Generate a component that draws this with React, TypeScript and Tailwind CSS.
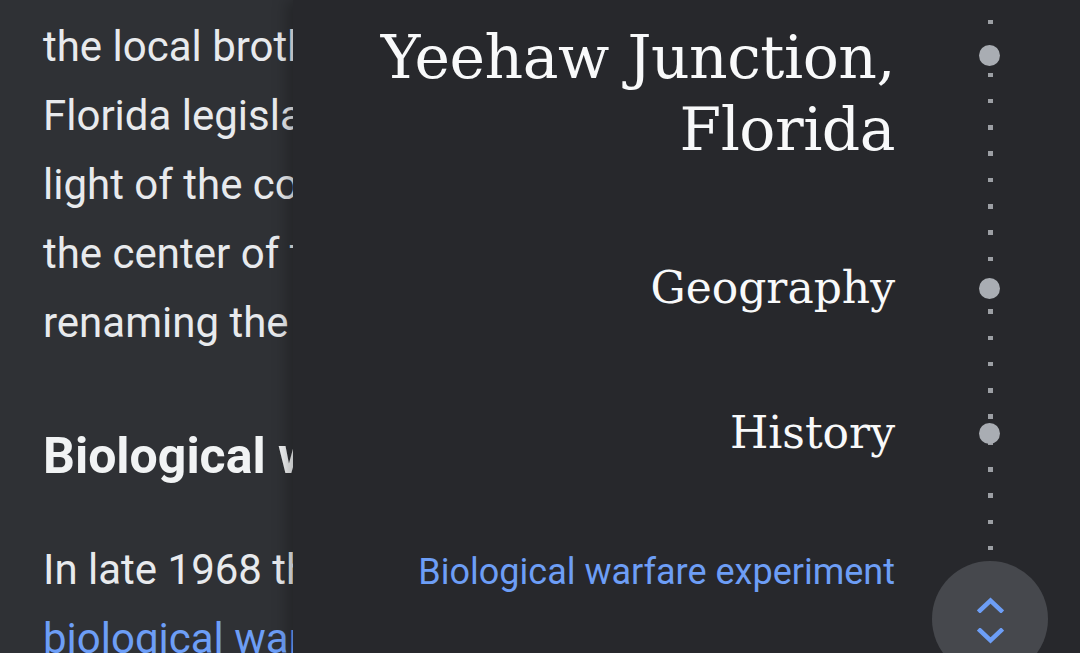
import React from "react";

const BODY_TOP = ["the local brothel", "Florida legislature", "light of the controversy", "the center of the", "renaming the"];

const SECTIONS = [
  { name: "Geography", top: "mt-[93px]" },
  { name: "History", top: "mt-[85px]" },
];

function Dot() {
  return <div className="w-[21px] h-[21px] rounded-full bg-[#a9adb3]" />;
}

export default function App() {
  return (
    <div className="flex w-[1080px] h-[653px] overflow-hidden bg-[#2f3135] font-['Roboto',sans-serif]">
      {/* article behind the drawer */}
      <div className="w-[293px] shrink-0 overflow-hidden pl-[43px] pt-[12px] text-[42px] leading-[69px] text-[#e8eaed] whitespace-nowrap">
        {BODY_TOP.map((line) => (
          <div key={line}>{line}</div>
        ))}
        <div className="mt-[65px] text-[50px] font-bold text-[#f1f3f4]">Biological warfare</div>
        <div className="mt-[44px]">In late 1968 the</div>
        <div className="text-[#6d9ef6]">biological warfare</div>
      </div>

      {/* contents drawer */}
      <div className="relative flex-1 bg-[#27282c] shadow-[-6px_0_14px_rgba(0,0,0,0.25)]">
        <div className="absolute left-[695px] top-[20px] w-[4.5px] h-[532px] bg-[repeating-linear-gradient(to_bottom,#9c9fa4_0px,#9c9fa4_4.5px,transparent_4.5px,transparent_26.3px)]" />

        <div className="relative flex flex-col pt-[21px] font-['DejaVu_Serif',serif] text-[#f8f9fa]">
          <div className="flex">
            <div className="flex-1 text-right text-[60px] leading-[72px] tracking-[-0.5px]">
              Yeehaw Junction,
              <br />
              Florida
            </div>
            <div className="w-[185px] pl-[84px] pt-[24px]">
              <Dot />
            </div>
          </div>

          {SECTIONS.map((s) => (
            <div key={s.name} className={`flex items-center ${s.top}`}>
              <div className="flex-1 text-right text-[44px] leading-[60px]">{s.name}</div>
              <div className="w-[185px] pl-[84px]">
                <Dot />
              </div>
            </div>
          ))}

          <div className="flex items-center mt-[79px]">
            <div className="flex-1 text-right font-['Roboto',sans-serif] text-[36px] leading-[60px] text-[#6d9ef6]">
              Biological warfare experiment
            </div>
            <div className="w-[185px]" />
          </div>
        </div>

        <button className="absolute left-[639px] top-[561px] w-[116px] h-[116px] rounded-full bg-[#46484d] flex flex-col items-center pt-[36px] gap-[15px]">
          <svg width="27" height="16" viewBox="0 0 27 16" fill="none">
            <path d="M3 13.5 L13.5 3.5 L24 13.5" stroke="#6d9ef6" strokeWidth="4.5" strokeLinecap="square" />
          </svg>
          <svg width="27" height="16" viewBox="0 0 27 16" fill="none">
            <path d="M3 2.5 L13.5 12.5 L24 2.5" stroke="#6d9ef6" strokeWidth="4.5" strokeLinecap="square" />
          </svg>
        </button>
      </div>
    </div>
  );
}
